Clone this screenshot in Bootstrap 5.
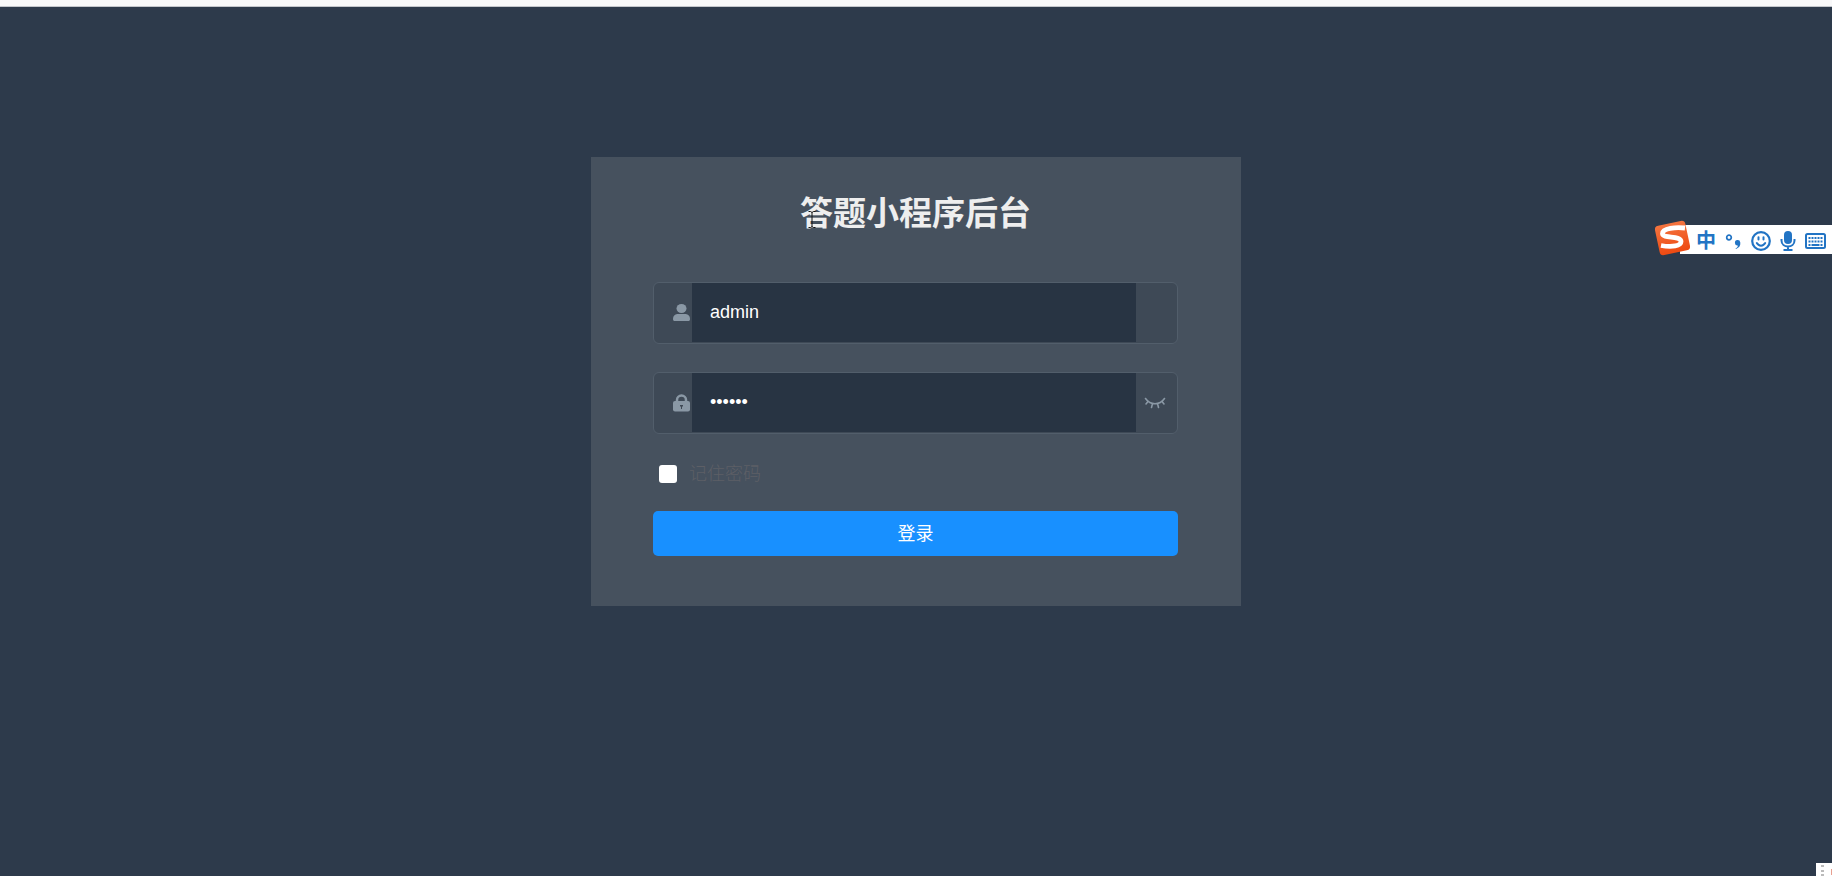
<!DOCTYPE html>
<html lang="zh-CN">
<head>
<meta charset="utf-8">
<meta name="viewport" content="width=device-width, initial-scale=1">
<title>答题小程序后台</title>
<link href="https://cdn.jsdelivr.net/npm/bootstrap@5.3.0/dist/css/bootstrap.min.css" rel="stylesheet">
<style>
  body { background: #2d3a4b; font-family: "Liberation Sans", "Noto Sans CJK SC", sans-serif; font-size: 18px; }
  .top-strip { height: 7px; background: #f8f8f9; border-bottom: 1px solid #c3c6cb; }
  .login-panel { width: 100%; max-width: 650px; margin-top: 150px; padding: 37px 63px 50px 62px; background: #46515e; }
  .login-title { font-size: 33px; line-height: 40px; font-weight: 700; color: #eee; margin-bottom: 48px; }
  .field { height: 62px; margin-bottom: 28px; border: 1px solid #525e6b; border-radius: 6px; background: #3e4956; color: #8a98a5; overflow: hidden; }
  .field-icon { width: 38px; padding-left: 18px; }
  .field-end { width: 41px; color: #8a98a5; }
  .field .form-control { height: 59px; padding: 0 18px; border: 0; border-radius: 0; background: #283443; color: #fff; font-size: 18px; box-shadow: none; }
  .remember { min-height: 0; height: 24px; margin: 0 0 25px 6px; padding: 0; gap: 12px; color: #5d5f66; font-weight: 300; line-height: 24px; }
  .remember .form-check-input { float: none; width: 18px; height: 18px; margin: 0; border: 0; border-radius: 3px; background-color: #fff; }
  .btn-login { height: 45px; padding: 1px 0 0; border: 0; border-radius: 5px; background: #1890ff; color: #fff; font-size: 18px; font-weight: 400; }
  .btn-login:hover { background: #40a0ff; color: #fff; }
  .pointer { left: 808px; top: 211px; }
  .ime { top: 225px; right: 0; height: 29px; width: 152px; padding: 2px 6px 0 16px; background: #fff; color: #2274c4; }
  .ime-logo { left: -26px; top: -5px; }
  .ime button { color: inherit; line-height: 1; }
  .corner { right: 0; bottom: 0; width: 16px; height: 13px; background: #fff; }
  .ime-lang { font-size: 20px; font-weight: 700; }
  svg { display: block; }
</style>
</head>
<body class="min-vh-100 position-relative">
<div class="top-strip"></div>
<main class="d-flex justify-content-center">
  <form class="login-panel">
    <h1 class="login-title text-center">答题小程序后台</h1>
    <div class="field d-flex">
      <label class="field-icon d-flex align-items-center flex-shrink-0" for="user" aria-label="用户名">
        <svg width="19" height="18" viewBox="0 0 19 18" fill="currentColor"><ellipse cx="9.500" cy="4.500" rx="5" ry="4.500"/><path d="M1 15c0-4 3-5 5-5h7c2 0 5 1 5 5 0 1.500-.5 2-2 2H3c-1.500 0-2-.5-2-2z"/></svg>
      </label>
      <input class="form-control" id="user" type="text" value="admin">
      <span class="field-end flex-shrink-0"></span>
    </div>
    <div class="field d-flex">
      <label class="field-icon d-flex align-items-center flex-shrink-0" for="pass" aria-label="密码">
        <svg width="19" height="18" viewBox="0 0 19 18"><path d="M5 8V6a4.500 4.500 0 0 1 9 0v2" fill="none" stroke="currentColor" stroke-width="2.500"/><rect x="1" y="7" width="17" height="10.500" rx="2" fill="currentColor"/><path d="M8 11h3v1l-1 1v2H9v-2l-1-1z" fill="#3f4955"/></svg>
      </label>
      <input class="form-control" id="pass" type="password" value="123456">
      <button class="field-end btn p-0 pe-1 border-0 d-flex align-items-center justify-content-center flex-shrink-0" type="button" aria-label="显示密码">
        <svg width="22" height="12" viewBox="0 0 22 12" fill="none" stroke="currentColor" stroke-width="1.600" stroke-linecap="round"><path d="M1.500 1.500c5 7 14 7 19 0M4 4.500l-2 2.500M8.500 6.500L7.500 10.500M13.500 6.500l1 4M18 4.500l2 2.500"/></svg>
      </button>
    </div>
    <div class="remember form-check d-flex align-items-center">
      <input class="form-check-input" id="remember" type="checkbox">
      <label for="remember">记住密码</label>
    </div>
    <button class="btn btn-login w-100 d-block" type="submit">登录</button>
  </form>
</main>
<svg class="pointer position-absolute" width="8" height="17" viewBox="0 0 8 17" fill="none"><path d="M.5 .5h2l1.500 1 1.500-1h2M4 1.500v14M.5 16.500h2l1.500-1 1.500 1h2" stroke="#111"/></svg>
<div class="ime position-absolute d-flex align-items-center justify-content-between">
  <svg class="ime-logo position-absolute" width="38" height="36" viewBox="0 0 38 36"><defs><linearGradient id="flame" x2="0" y2="1"><stop stop-color="#f4743f"/><stop offset="1" stop-color="#ee4a12"/></linearGradient></defs><rect x="3" y="3" width="31" height="30" rx="4" transform="rotate(-12 18.500 18)" fill="url(#flame)"/><path d="M31 8C22 7 8.500 8 8.500 13.500c0 5.500 18.500 1.500 18.500 8 0 4.500-9 6-20 4" fill="none" stroke="#fff" stroke-width="4.800"/></svg>
  <button class="ime-lang btn p-0 border-0" type="button">中</button>
  <button class="btn p-0 border-0" type="button" aria-label="标点"><svg width="16" height="16" viewBox="0 0 16 16"><circle cx="4" cy="4.500" r="2.300" fill="none" stroke="currentColor" stroke-width="1.700"/><path d="M10.500 15.500c2-1 2.500-2 2.200-3a2.700 2.700 0 1 1 2.600-3c.4 3-1 5.200-4.300 6.500z" fill="currentColor"/></svg></button>
  <button class="btn p-0 border-0" type="button" aria-label="表情"><svg width="20" height="20" viewBox="0 0 20 20" fill="none" stroke="currentColor" stroke-width="2.200" stroke-linecap="round"><circle cx="10" cy="10" r="8.800"/><path d="M7.500 6.200v2.300M12.500 6.200v2.300M5.800 12c2 3.500 6.400 3.500 8.400 0" stroke-width="2"/></svg></button>
  <button class="btn p-0 border-0" type="button" aria-label="语音"><svg width="16" height="20" viewBox="0 0 16 20"><rect x="4" y="0" width="8" height="13" rx="4" fill="currentColor"/><path d="M1.500 8v1.500c0 8 13 8 13 0V8M8 15.500V19M3.500 19h9" fill="none" stroke="currentColor" stroke-width="2"/></svg></button>
  <button class="btn p-0 border-0" type="button" aria-label="键盘"><svg width="21" height="16" viewBox="0 0 21 16" fill="none" stroke="currentColor"><rect x="1" y="1" width="19" height="14" rx="1.500" stroke-width="2"/><path d="M3.500 5h14M3.500 8.500h14" stroke-width="2.200" stroke-dasharray="2 1"/><path d="M3.500 12h2M6.500 12h8M15.500 12h2" stroke-width="2"/></svg></button>
</div>
<div class="corner position-absolute">
  <svg width="16" height="13" viewBox="0 0 16 13"><path d="M5 2h3v2H5zM5 7h3v2H5zM5 11h3v2H5z" fill="#bbb"/><path d="M15 6h1v6h-1z" fill="#e8a090"/></svg>
</div>
<script src="https://cdn.jsdelivr.net/npm/bootstrap@5.3.0/dist/js/bootstrap.bundle.min.js"></script>
</body>
</html>
